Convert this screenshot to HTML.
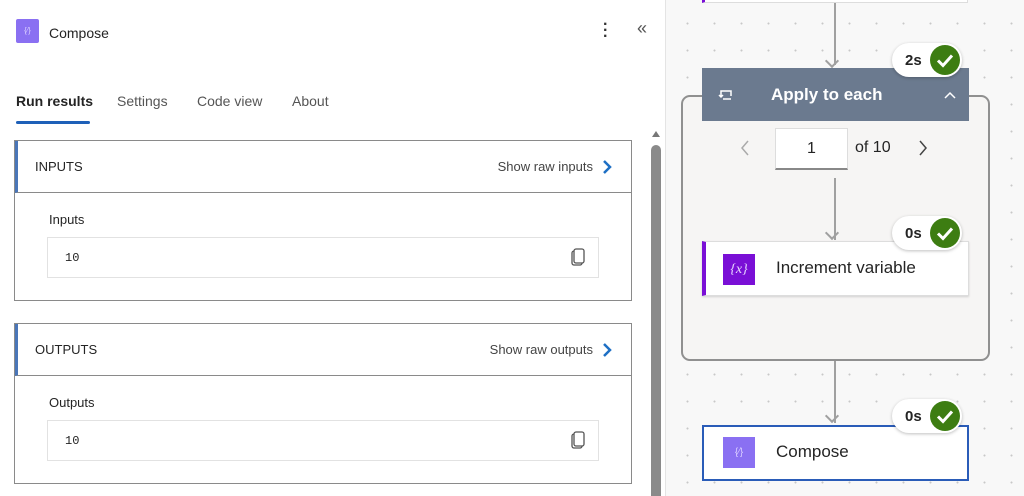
<!DOCTYPE html>
<html><head><meta charset="utf-8"><style>
*{box-sizing:border-box;margin:0;padding:0}
body{width:1024px;height:496px;overflow:hidden;font-family:"Liberation Sans",sans-serif;background:#fff;position:relative;color:#242424}
.a{position:absolute}
#canvas{left:665px;top:0;width:359px;height:496px;background-color:#f8f8f8;background-image:radial-gradient(circle,#c8c8c8 0.8px,transparent 1.2px);background-size:27px 27px;background-position:8px 10px;border-left:1px solid #e4e4e4}
.card{border:1px solid #8a8a8a;background:#fff}
.hdr{border-left:3px solid #4a76b8;border-bottom:1px solid #8a8a8a;height:52px;display:flex;align-items:center;justify-content:space-between;padding:0 18px 0 17px;font-size:13px}
.raw{color:#444;display:flex;align-items:center;gap:8px}
.box{border:1px solid #e2e2e2;font-family:"Liberation Mono",monospace;font-size:12px;padding-left:17px;display:flex;align-items:center}
.badge{background:#fff;border-radius:17px;height:34px;width:70px;box-shadow:0 1px 3px rgba(0,0,0,.25);font-size:15px;font-weight:bold;display:flex;align-items:center;padding-left:13px}
.chk{position:absolute;right:2px;top:2px;width:30px;height:30px;border-radius:50%;background:#3d7d12}
.line{width:2px;background:#a0a0a0}
</style></head><body>
<div class="a" style="left:16px;top:19px;width:23px;height:24px;background:#8a70f2;border-radius:2px;color:#d8ccff;font-size:8px;text-align:center;line-height:24px">{⁄}</div>
<div class="a" style="left:49px;top:25px;font-size:14px">Compose</div>
<div class="a" style="left:603px;top:22px;width:4px;font-size:16px;line-height:6px;font-weight:bold;color:#333">·<br>·<br>·</div>
<div class="a" style="left:637px;top:18px;font-size:18px;color:#555">«</div>
<div class="a" style="left:16px;top:93px;font-size:14px;font-weight:bold;color:#242424">Run results</div>
<div class="a" style="left:117px;top:93px;font-size:14px;color:#555">Settings</div>
<div class="a" style="left:197px;top:93px;font-size:14px;color:#555">Code view</div>
<div class="a" style="left:292px;top:93px;font-size:14px;color:#555">About</div>
<div class="a" style="left:16px;top:121px;width:74px;height:3px;background:#1e60b8;border-radius:2px"></div>

<div class="a card" style="left:14px;top:140px;width:618px;height:161px">
<div class="hdr"><span>INPUTS</span><span class="raw">Show raw inputs <svg width="12" height="16"><path d="M3 2l6 6-6 6" stroke="#1e6fc4" stroke-width="2.5" fill="none"/></svg></span></div>
<div class="a" style="left:34px;top:71px;font-size:13px">Inputs</div>
<div class="a box" style="left:32px;top:96px;width:552px;height:41px">10</div>
<svg class="a" style="left:556px;top:107px" width="14" height="18"><rect x="1" y="3" width="10" height="14" rx="2" fill="#fff" stroke="#555" stroke-width="1.3"/><rect x="3" y="1" width="10" height="14" rx="2" fill="#fff" stroke="#555" stroke-width="1.3"/></svg>
</div>
<div class="a card" style="left:14px;top:323px;width:618px;height:161px">
<div class="hdr"><span>OUTPUTS</span><span class="raw">Show raw outputs <svg width="12" height="16"><path d="M3 2l6 6-6 6" stroke="#1e6fc4" stroke-width="2.5" fill="none"/></svg></span></div>
<div class="a" style="left:34px;top:71px;font-size:13px">Outputs</div>
<div class="a box" style="left:32px;top:96px;width:552px;height:41px">10</div>
<svg class="a" style="left:556px;top:107px" width="14" height="18"><rect x="1" y="3" width="10" height="14" rx="2" fill="#fff" stroke="#555" stroke-width="1.3"/><rect x="3" y="1" width="10" height="14" rx="2" fill="#fff" stroke="#555" stroke-width="1.3"/></svg>
</div>
<div class="a" style="left:652px;top:131px;width:0;height:0;border-left:4px solid transparent;border-right:4px solid transparent;border-bottom:6px solid #777"></div>
<div class="a" style="left:651px;top:145px;width:10px;height:351px;background:#8a8a8a;border-radius:5px 5px 0 0"></div>

<div class="a" id="canvas"></div>
<div class="a" style="left:702px;top:-4px;width:266px;height:7px;background:#fff;border:1px solid #ddd;border-left:3px solid #7a0fd6"></div>
<div class="a line" style="left:834px;top:3px;height:62px"></div>
<div class="a" style="left:827px;top:56px;width:10px;height:10px;border-right:2px solid #a0a0a0;border-bottom:2px solid #a0a0a0;transform:rotate(45deg)"></div>
<div class="a" style="left:681px;top:95px;width:309px;height:266px;border:2px solid #909090;border-radius:9px;background:#f6f5f4"></div>
<div class="a" style="left:702px;top:68px;width:267px;height:53px;background:#6b7a8f;color:#fff;font-size:17px;font-weight:bold;display:flex;align-items:center">
<svg style="margin-left:16px" width="16" height="14"><path d="M3 9V3h10v5M1 7l2 2 2-2M13 11H5" stroke="#fff" stroke-width="1.5" fill="none"/></svg><span style="margin-left:37px">Apply to each</span><svg style="margin-left:auto;margin-right:12px" width="14" height="10"><path d="M2 8l5-5 5 5" stroke="#fff" stroke-width="1.5" fill="none"/></svg></div>
<div class="a badge" style="left:892px;top:43px">2s<div class="chk"><svg width="30" height="30"><path d="M8 15.5l5 5 9-10" stroke="#fff" stroke-width="3" fill="none"/></svg></div></div>
<svg class="a" style="left:740px;top:140px" width="10" height="16"><path d="M8 1L2 8l6 7" stroke="#aaa" stroke-width="1.5" fill="none"/></svg>
<div class="a" style="left:775px;top:128px;width:73px;height:42px;background:#fff;border:1px solid #ddd;border-bottom:2px solid #888;text-align:center;line-height:40px;font-size:16px">1</div>
<div class="a" style="left:855px;top:139px;font-size:16px">of 10</div>
<svg class="a" style="left:918px;top:140px" width="10" height="16"><path d="M2 1l6 7-6 7" stroke="#444" stroke-width="1.5" fill="none"/></svg>
<div class="a line" style="left:834px;top:178px;height:62px"></div>
<div class="a" style="left:827px;top:228px;width:10px;height:10px;border-right:2px solid #a0a0a0;border-bottom:2px solid #a0a0a0;transform:rotate(45deg)"></div>
<div class="a" style="left:702px;top:241px;width:267px;height:55px;background:#fff;border:1px solid #ddd;border-left:4px solid #7a0fd6;box-shadow:0 1px 2px rgba(0,0,0,.15)"></div>
<div class="a" style="left:723px;top:254px;width:32px;height:31px;background:#7a0fd6;color:#e8d8ff;font-family:'Liberation Serif',serif;font-style:italic;font-size:14px;text-align:center;line-height:31px">{x}</div>
<div class="a" style="left:776px;top:258px;font-size:17px">Increment variable</div>
<div class="a badge" style="left:892px;top:216px">0s<div class="chk"><svg width="30" height="30"><path d="M8 15.5l5 5 9-10" stroke="#fff" stroke-width="3" fill="none"/></svg></div></div>
<div class="a line" style="left:834px;top:361px;height:62px"></div>
<div class="a" style="left:827px;top:411px;width:10px;height:10px;border-right:2px solid #a0a0a0;border-bottom:2px solid #a0a0a0;transform:rotate(45deg)"></div>
<div class="a" style="left:702px;top:425px;width:267px;height:56px;background:#fff;border:2px solid #2a5cb8"></div>
<div class="a" style="left:723px;top:437px;width:32px;height:31px;background:#8a70f2;color:#d8ccff;font-size:10px;text-align:center;line-height:31px">{⁄}</div>
<div class="a" style="left:776px;top:442px;font-size:17px">Compose</div>
<div class="a badge" style="left:892px;top:399px">0s<div class="chk"><svg width="30" height="30"><path d="M8 15.5l5 5 9-10" stroke="#fff" stroke-width="3" fill="none"/></svg></div></div>
</body></html>
